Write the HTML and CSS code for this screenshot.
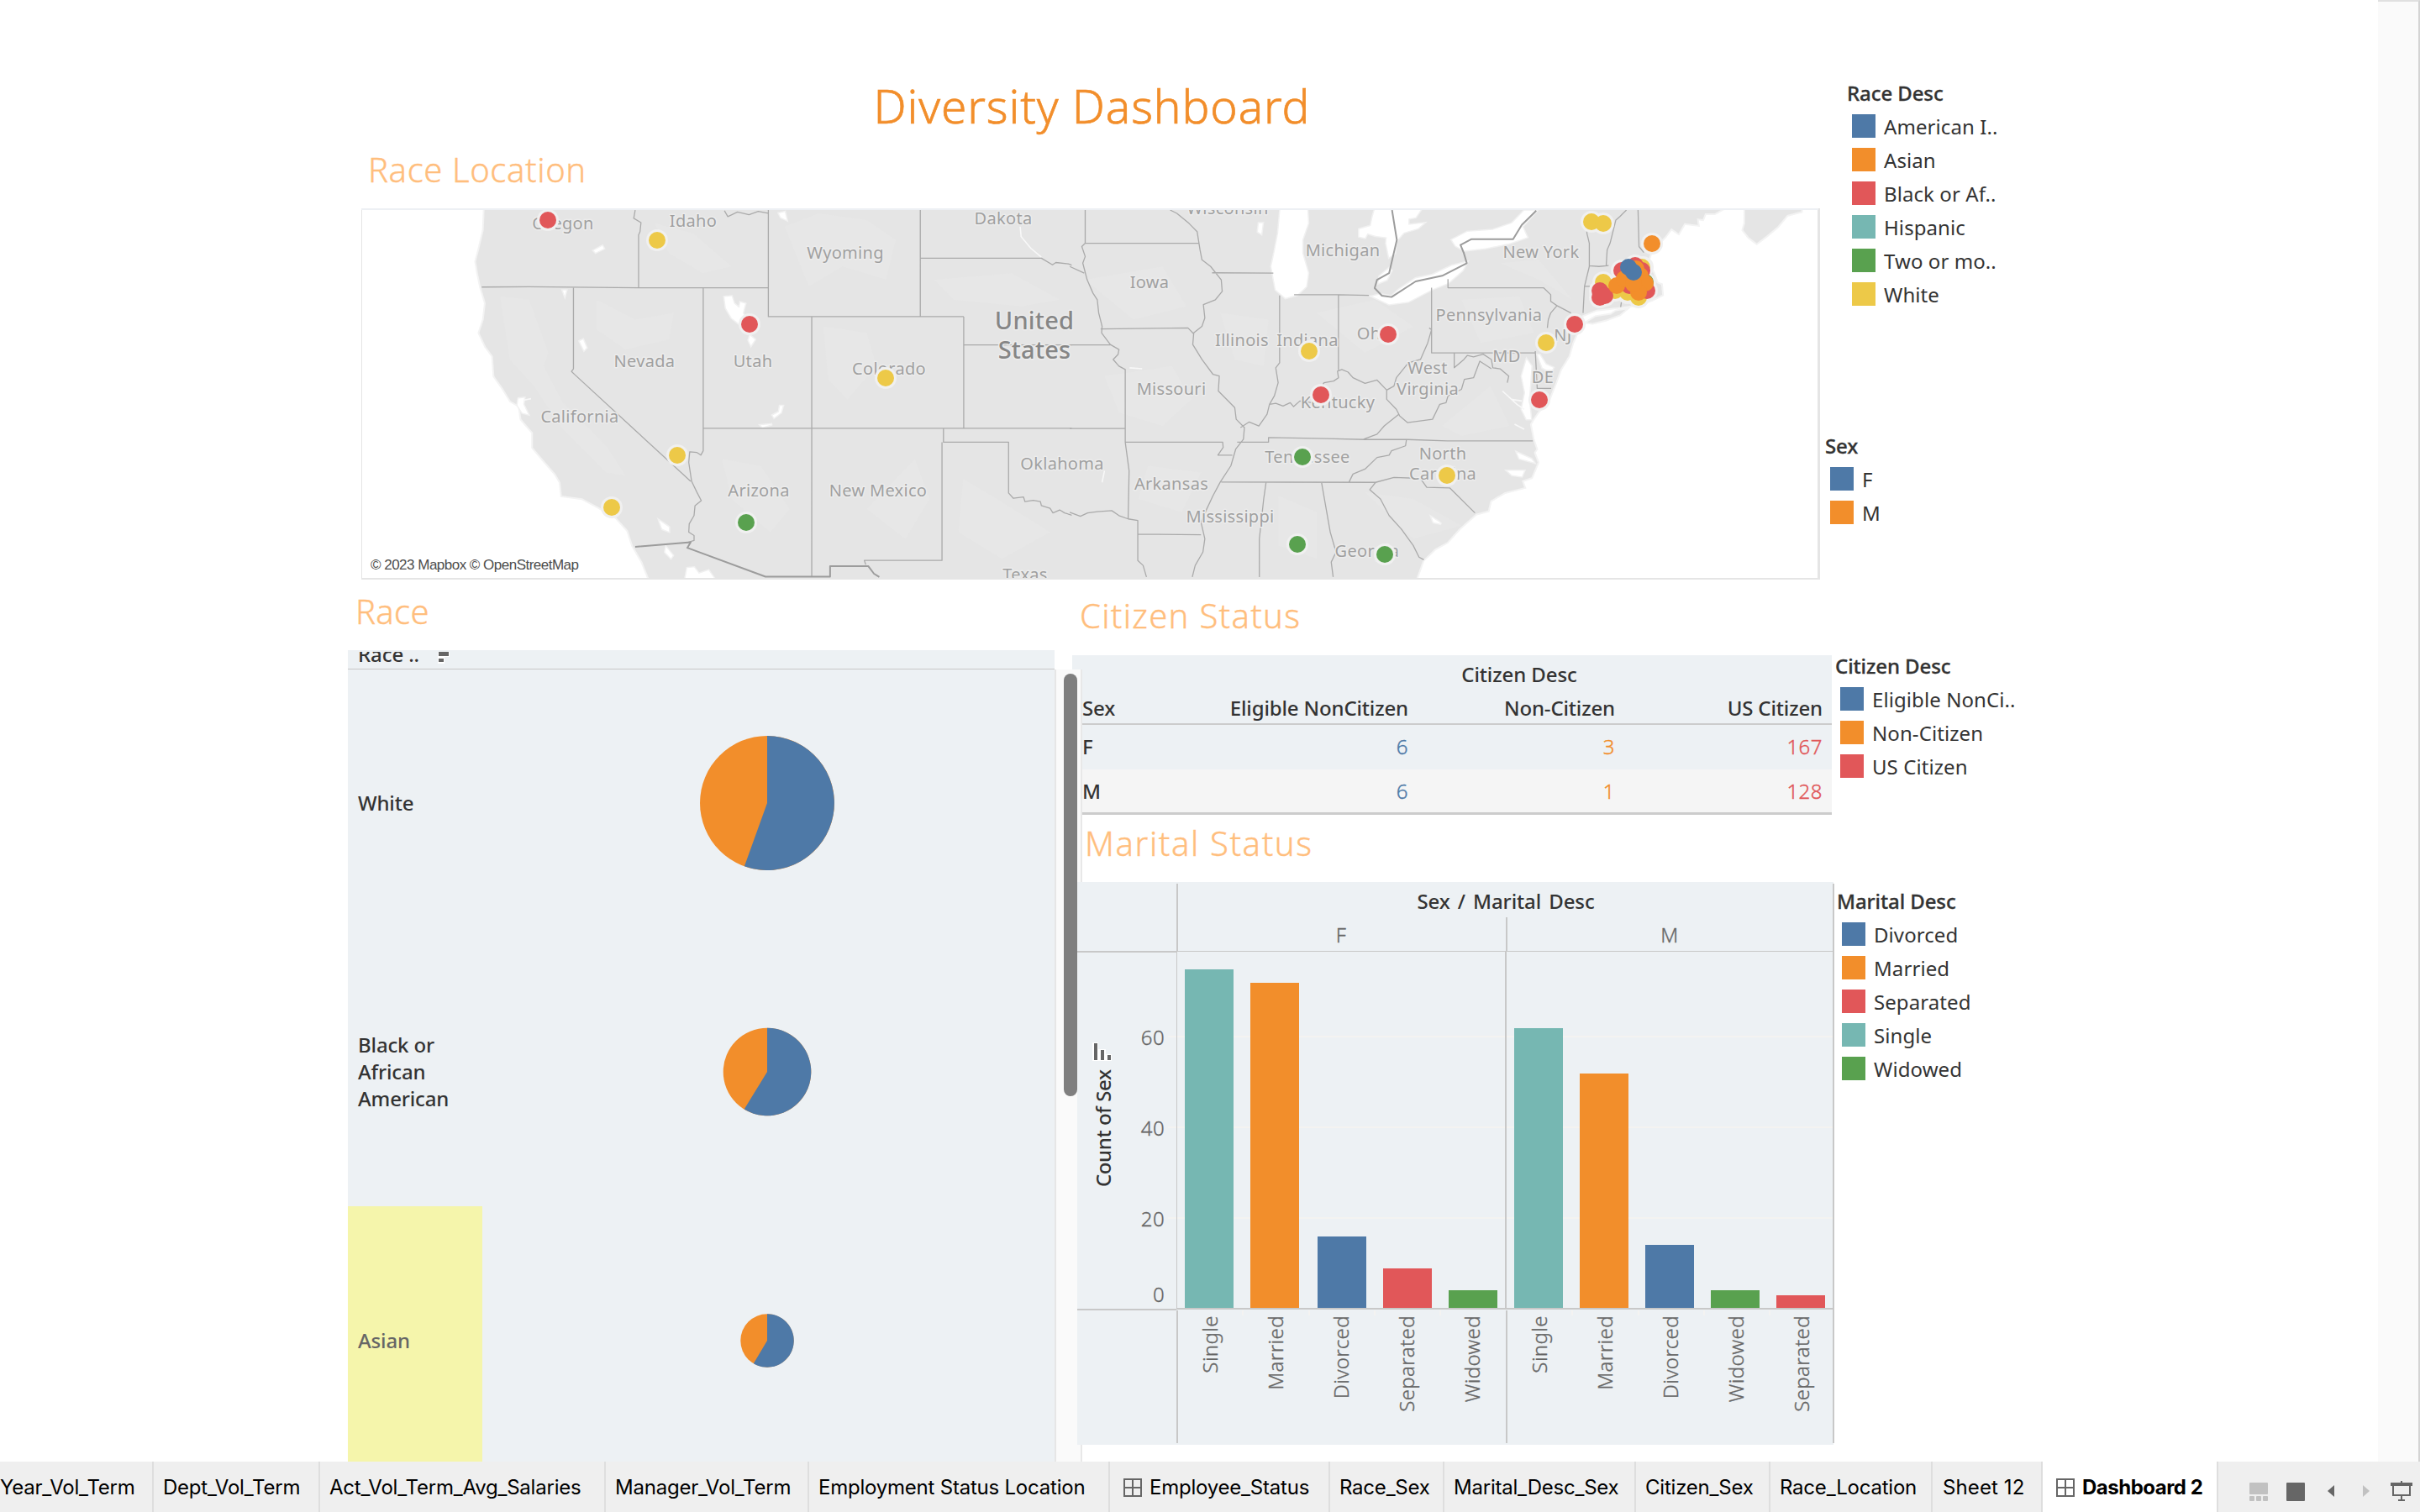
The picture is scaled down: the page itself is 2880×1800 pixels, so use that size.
FILE: index.html
```html
<!DOCTYPE html>
<html lang="en">
<head>
<meta charset="utf-8">
<title>Diversity Dashboard</title>
<link rel="stylesheet" href="styles.css">
</head>
<body>
<div class="workspace">
<main class="dashboard">
  <section class="top">
    <div class="top-main">
      <h1 class="title">Diversity Dashboard</h1>
      <h2 class="heading heading-location">Race Location</h2>
      <svg class="map" viewBox="430 248 1736 442" width="1736" height="442">
        <defs><clipPath id="mapclip"><rect x="431" y="250" width="1732" height="438"/></clipPath></defs>
        <rect x="430" y="248" width="1736" height="442" fill="#e5e5e5"/>
        <rect x="430" y="248" width="1734" height="2" fill="#edf0f4"/>
        <rect x="431" y="250" width="1732" height="438" fill="#fff"/>
        <g clip-path="url(#mapclip)">
          <!-- western half -->
          <g transform="translate(400 80) scale(.5741 .3954)">
            <path class="land" d="M308 420L306 490 298 540 290 585 294 620 300 662 310 710 306 760 297 800 310 840 325 870 328 930 345 965 362 1005 380 1020 384 1060 408 1100 408 1145 428 1180 455 1225 465 1250 468 1290 510 1298 545 1325 580 1355 605 1395 615 1440 635 1490 650 1545 1580 1545 1580 420Z"/>
            <path class="relief" d="M340 690L400 700 440 860 430 900 470 1010 560 1140 600 1230 560 1220 470 1090 410 960 360 880ZM660 470L740 500 820 600 760 620 690 560ZM930 480L1000 440 1100 460 1160 520 1140 640 1050 600 980 660ZM1010 780L1100 800 1120 900 1060 1000 1020 940ZM1240 640L1400 620 1500 700 1420 720 1280 700ZM800 1180L880 1200 940 1330 900 1400 820 1300ZM1100 1330L1200 1180 1230 1300 1180 1420ZM1300 1240L1370 1300 1480 1400 1380 1480 1290 1400ZM540 700L620 760 700 740 690 820 600 850 540 790Z"/>
            <path class="water" d="M805 692L820 690 825 712 836 725 838 708 848 712 843 740 852 768 840 778 820 755 808 725ZM858 808L868 820 860 838 855 822ZM724 1540L728 1508 742 1506 752 1525 772 1515 784 1540ZM505 825L512 820 519 845 514 852ZM534 552L552 538 555 546 538 558ZM670 1365L690 1385 690 1398 676 1390ZM684 1445L698 1470 694 1478 682 1460ZM918 440L930 436 934 460 922 452ZM378 998L390 996 388 1015 398 1045 386 1040 376 1018ZM470 672L477 672 474 688ZM920 1020L926 1020 922 1040 908 1055 905 1048 918 1038ZM880 1078L904 1075 884 1084Z"/>
            <path class="river" d="M1418 480L1420 510 1440 545 1462 572M388 1003L404 998"/>
            <path class="state" d="M620 430L617 455 632 468 630 495 627 505V664M302 662L400 661 627 664H896M896 430V751H1301M1211 430V751M1211 575H1462L1485 595 1492 588 1518 592 1540 605 1555 620 1570 680M1553 430V530M1568 530H1548L1550 575 1545 600 1555 620M492 664V908L488 916 495 926 735 1247M761 664V1155L756 1168 748 1160 733 1158 731 1190 737 1247 748 1280 757 1305 744 1320 742 1350 732 1375 731 1400 742 1410 742 1425 727 1432M986 751V1534M761 1087H1570M1301 751V1087M1301 836H1570M1259 1087V1129H1394V1282L1404 1298 1425 1294 1428 1308 1445 1304 1460 1308 1462 1320 1480 1328 1486 1342 1500 1333 1510 1342 1528 1350 1534 1338 1552 1354 1570 1345M1256 1129V1485H1095L1098 1498M805 432L812 450 832 436 856 444 875 434 896 440"/>
            <path class="border" d="M620 1444L735 1430 728 1447 890 1534H1024V1502H1103L1115 1525 1126 1535"/>
          </g>
          <!-- eastern half -->
          <g transform="translate(1280 80) scale(.5741 .3954)">
            <path class="land" d="M0 420H1350L1325 440 1305 440 1300 458 1288 455 1290 475 1262 470 1250 500 1235 485 1222 510 1205 535 1192 560 1185 590 1198 620 1205 650 1214 655 1216 685 1195 700 1165 715 1130 722 1080 730 1050 748 1045 780 1030 830 1022 870 1005 910 995 950 988 975 980 1005 960 1035 948 1060 942 1075 948 1120 955 1150 950 1160 958 1190 945 1235 925 1245 930 1265 890 1280 860 1305 855 1335 830 1345 795 1390 770 1430 745 1450 720 1485 705 1545H0Z"/>
            <rect x="-8" y="420" width="20" height="1125" fill="#e5e5e5"/>
            <path class="land" d="M1388 420L1388 470 1384 490 1396 512 1412 530 1432 508 1455 480 1475 445 1504 434 1505 420ZM1060 768L1078 752 1110 745 1120 735 1140 730 1128 745 1100 760 1072 770Z"/>
            <path class="relief" d="M60 930L200 900 240 1000 180 1080 90 1040ZM300 740L400 760 390 900 330 880ZM500 740L620 700 700 780 600 860ZM800 700L920 690 950 800 840 830ZM760 1080L860 960 900 1080 800 1110ZM600 1280L700 1300 800 1380 700 1420ZM20 640L180 600 230 720 120 760ZM150 1200L260 1220 220 1340 130 1300ZM420 1290L500 1340 500 1480 420 1440ZM880 590L960 580 1030 700 960 640Z"/>
            <path class="water" d="M425 420H480L482 470 470 520 470 560 482 620 478 660 460 685 435 695 415 670 406 600 412 560 420 500ZM622 420H720L705 452 690 456 690 475 722 470 710 485 680 498 664 525 662 560 650 572 644 530 645 512 622 508 605 500 600 514 588 510 588 488 612 478 616 450ZM650 605L655 612 645 640 628 650 630 630ZM615 690L650 714 690 706 740 668 772 650 802 612 812 586 780 598 740 625 705 636 670 670 655 690 632 684ZM780 520L812 496 865 490 905 470 930 432 956 432 926 480 936 512 900 530 850 545 806 552 788 538ZM935 880L925 930 932 980 925 1030 935 1060 944 1060 940 1000 945 900ZM958 866L968 905 986 918 990 905 975 895 962 866ZM738 1355L752 1368 758 1375 742 1370ZM380 470L388 470 385 502 378 495ZM895 1215L930 1215 925 1232 905 1228ZM915 1160L945 1180 950 1190 920 1178Z"/>
            <path class="river" d="M885 975L915 1015 930 1030M903 1000L925 1005M910 1075L930 1090M112 905L138 908M60 1215L55 1250"/>
            <path class="state" d="M20 430V530H255M20 530L13 540 20 570 15 590 24 640 36 680 45 700 48 740 55 780 54 800 72 835 90 850 88 865 78 880 90 900 103 910V1129M-12 600L18 620M196 430L210 440 235 470 252 495 258 550 262 580 280 600 302 640 304 675 290 700 265 715 268 755 262 780 245 800 243 835 262 880 285 925 298 930 296 975 330 1025 333 1060 350 1085 348 1120 332 1150 322 1200 300 1249 285 1290 272 1330 260 1370 268 1420 264 1460 248 1500 242 1535M52 788L233 785 245 803M283 619L410 620M-12 836H72M-12 1088H103M103 1129H305L306 1145 295 1168H325M103 1129L111 1215 109 1360M-12 1340L10 1352 25 1342 45 1338 75 1335 90 1350 109 1360 129 1365V1485L140 1500 147 1535M129 1406L260 1408M335 1129H400V1115L520 1118 600 1121 688 1121 770 1125H948M302 1249L622 1250 660 1235 715 1238 728 1265 776 1267 828 1342M686 1121L684 1140 655 1155 650 1168 625 1175 600 1210 575 1225 567 1249M395 1249L390 1300 381 1420V1535M510 1251L528 1400 540 1460 530 1490 534 1535M622 1250L610 1272 632 1300 650 1350 675 1390 700 1440 712 1475 722 1483M423 687V890L415 905 420 950 412 990 402 1015 397 1045 380 1080 360 1068 342 1085M402 1015L415 1012 430 1020 445 1010 452 1022 465 1005 490 1010 515 950 535 945 545 935 543 915 552 910 565 918 575 935 600 952 625 942 645 972 660 960 665 935 690 890 715 880 730 830 738 790 733 785M545 685V912M453 685H545L608 687M738 664V860H953M772 638V664H970L985 685 985 705 998 718 985 740 980 760 978 785M998 718L1027 740M785 860V905L805 880 812 868 825 872 845 864 862 880 865 905 880 908 898 930 895 950M645 972L645 1000 665 1030 672 1050 688 1070 740 1060 755 1015 768 1010 772 990 800 970 806 940 825 935 838 885 862 908M670 1045L640 1080 625 1105 597 1120M953 855L957 967H986M1052 740L1055 660 1065 600V530L1060 500V485M1065 598L1085 600 1105 597M1100 597L1102 550 1108 530 1120 460 1128 450 1142 430M1166 430L1168 540 1178 558M1055 660H1066M1132 702L1130 722"/>
            <path class="border" d="M656 430L666 520 650 620 625 640 620 665 635 688 655 692 705 645 760 628 811 590 805 560 798 535 820 518H907L925 475 955 432"/>
          </g>
          <g class="places">
            <text x="670" y="273">Oregon</text><text x="825" y="270">Idaho</text><text x="1006" y="308">Wyoming</text><text x="1194" y="267">Dakota</text><text x="767" y="437">Nevada</text><text x="896" y="437">Utah</text><text x="1058" y="446">Colorado</text><text x="690" y="503">California</text><text x="903" y="591">Arizona</text><text x="1045" y="591">New Mexico</text><text x="1264" y="559">Oklahoma</text><text x="1220" y="691">Texas</text><text x="1461" y="255">Wisconsin</text><text x="1598" y="305">Michigan</text><text x="1368" y="343">Iowa</text><text x="1834" y="307">New York</text><text x="1772" y="382">Pennsylvania</text><text x="1478" y="412">Illinois</text><text x="1556" y="412">Indiana</text><text x="1638" y="404">Ohio</text><text x="1860" y="406">NJ</text><text x="1793" y="431">MD</text><text x="1699" y="445">West</text><text x="1699" y="470">Virginia</text><text x="1836" y="456">DE</text><text x="1394" y="470">Missouri</text><text x="1592" y="486">Kentucky</text><text x="1556" y="551">Tennessee</text><text x="1717" y="547">North</text><text x="1717" y="571">Carolina</text><text x="1394" y="583">Arkansas</text><text x="1464" y="622">Mississippi</text><text x="1627" y="663">Georgia</text>
            <g class="country"><text x="1231" y="392">United</text><text x="1231" y="427">States</text></g>
          </g>
          <g class="halo">
            <circle cx="652" cy="262" r="13"/><circle cx="782" cy="286" r="13"/><circle cx="892" cy="386" r="13"/><circle cx="1054" cy="450" r="13"/><circle cx="806" cy="542" r="13"/><circle cx="728" cy="604" r="13"/><circle cx="888" cy="622" r="13"/><circle cx="1894" cy="264" r="13"/><circle cx="1908" cy="266" r="13"/><circle cx="1966" cy="290" r="13"/><circle cx="1874" cy="386" r="13"/><circle cx="1840" cy="408" r="13"/><circle cx="1832" cy="476" r="13"/><circle cx="1558" cy="418" r="13"/><circle cx="1652" cy="398" r="13"/><circle cx="1572" cy="470" r="13"/><circle cx="1550" cy="544" r="13"/><circle cx="1722" cy="566" r="13"/><circle cx="1544" cy="648" r="13"/><circle cx="1648" cy="660" r="13"/><circle cx="1908" cy="336" r="13"/><circle cx="1955" cy="318" r="13"/><circle cx="1950" cy="354" r="13"/><circle cx="1904" cy="346" r="13"/><circle cx="1904" cy="354" r="13"/><circle cx="1910" cy="352" r="13"/><circle cx="1922" cy="346" r="13"/><circle cx="1937" cy="349" r="13"/><circle cx="1930" cy="322" r="13"/><circle cx="1946" cy="316" r="13"/><circle cx="1960" cy="346" r="13"/><circle cx="1958" cy="337" r="13"/>
          </g>
          <g class="white">
            <circle cx="782" cy="286" r="10"/><circle cx="1054" cy="450" r="10"/><circle cx="806" cy="542" r="10"/><circle cx="728" cy="604" r="10"/><circle cx="1894" cy="264" r="10"/><circle cx="1908" cy="266" r="10"/><circle cx="1840" cy="408" r="10"/><circle cx="1558" cy="418" r="10"/><circle cx="1722" cy="566" r="10"/><circle cx="1908" cy="336" r="10"/><circle cx="1954" cy="318" r="10"/><circle cx="1922" cy="346" r="10"/><circle cx="1937" cy="348" r="10"/><circle cx="1950" cy="354" r="10"/>
          </g>
          <g class="multi"><circle cx="888" cy="622" r="10"/><circle cx="1550" cy="544" r="10"/><circle cx="1544" cy="648" r="10"/><circle cx="1648" cy="660" r="10"/><circle cx="1958" cy="336" r="10"/></g>
          <g class="black">
            <circle cx="652" cy="262" r="10"/><circle cx="892" cy="386" r="10"/><circle cx="1874" cy="386" r="10"/><circle cx="1832" cy="476" r="10"/><circle cx="1652" cy="398" r="10"/><circle cx="1572" cy="470" r="10"/><circle cx="1904" cy="346" r="10"/><circle cx="1904" cy="354" r="10"/><circle cx="1910" cy="352" r="10"/><circle cx="1930" cy="322" r="10"/><circle cx="1946" cy="316" r="10"/><circle cx="1954" cy="322" r="10"/><circle cx="1960" cy="346" r="10"/><circle cx="1939" cy="340" r="10"/>
          </g>
          <g class="asian"><circle cx="1966" cy="290" r="10"/><circle cx="1924" cy="340" r="10"/><circle cx="1933" cy="332" r="10"/><circle cx="1947" cy="320" r="10"/><circle cx="1952" cy="328" r="10"/><circle cx="1958" cy="337" r="10"/><circle cx="1950" cy="348" r="10"/><circle cx="1944" cy="338" r="10"/></g>
          <g class="american"><circle cx="1938" cy="318" r="10"/><circle cx="1944" cy="324" r="10"/></g>
          <rect x="436" y="660" width="260" height="24" fill="#fff" opacity=".6"/>
          <text class="credit" x="441" y="678" textLength="248">© 2023 Mapbox © OpenStreetMap</text>
        </g>
      </svg>
    </div>
    <aside class="top-legends">
      <div class="legend legend-race">
        <h3>Race Desc</h3>
        <p><i class="sw blue"></i>American I..</p>
        <p><i class="sw orange"></i>Asian</p>
        <p><i class="sw red"></i>Black or Af..</p>
        <p><i class="sw teal"></i>Hispanic</p>
        <p><i class="sw green"></i>Two or mo..</p>
        <p><i class="sw yellow"></i>White</p>
      </div>
      <div class="legend">
        <h3>Sex</h3>
        <p><i class="sw blue"></i>F</p>
        <p><i class="sw orange"></i>M</p>
      </div>
    </aside>
  </section>

  <section class="bottom">
    <div class="race">
      <h2 class="heading heading-race">Race</h2>
      <div class="race-body">
        <div class="race-panel">
          <div class="race-head"><span>Race ..</span>
            <svg width="16" height="14" viewBox="0 0 16 14"><path d="M0 0H14V6H8V14H0Z" fill="#fff"/><path d="M1 0H13V5H1ZM1 8H7V12H1Z" fill="#666"/></svg>
          </div>
          <div class="race-row"><div class="race-name">White</div>
            <svg width="160" height="160" viewBox="-80 -80 160 160"><circle r="80" fill="#f28e2b"/><path d="M0 0V-80A80 80 0 1 1 -27.1 75.3Z" fill="#4e79a7"/></svg></div>
          <div class="race-row"><div class="race-name">Black or<br>African<br>American</div>
            <svg width="106" height="106" viewBox="-53 -53 106 106"><circle r="52.3" fill="#f28e2b"/><path d="M0 0V-52.3A52.3 52.3 0 1 1 -27.3 44.6Z" fill="#4e79a7"/></svg></div>
          <div class="race-row"><div class="race-name selected">Asian</div>
            <svg width="64" height="64" viewBox="-32 -32 64 64"><circle r="31.7" fill="#f28e2b"/><path d="M0 0V-31.7A31.7 31.7 0 1 1 -16.2 27.2Z" fill="#4e79a7"/></svg></div>
        </div>
        <div class="track"><div class="thumb"></div></div>
      </div>
    </div>

    <div class="right">
      <h2 class="heading heading-citizen">Citizen Status</h2>
      <div class="citizen">
        <div class="c-title">Citizen Desc</div>
        <div class="c-row c-head"><span>Sex</span><span>Eligible NonCitizen</span><span>Non-Citizen</span><span>US Citizen</span></div>
        <div class="c-row c-f"><span>F</span><span>6</span><span>3</span><span>167</span></div>
        <div class="c-row c-m"><span>M</span><span>6</span><span>1</span><span>128</span></div>
      </div>
      <h2 class="heading heading-marital">Marital Status</h2>
      <svg class="marital" viewBox="1282 1050 902 670" width="902" height="670">
        <rect x="1282" y="1050" width="900" height="670" fill="#edf1f4"/>
        <g fill="#f4f3f1"><rect x="1390" y="1233" width="792" height="2"/><rect x="1390" y="1341" width="792" height="2"/><rect x="1390" y="1449" width="792" height="2"/><path d="M1478 1560h2v6h-2zM1557 1560h2v6h-2zM1635 1560h2v6h-2zM1713 1560h2v6h-2zM1870 1560h2v6h-2zM1949 1560h2v6h-2zM2027 1560h2v6h-2zM2105 1560h2v6h-2z"/></g>
        <g fill="#76b7b2"><rect x="1410" y="1154" width="58" height="403"/><rect x="1802" y="1224" width="58" height="333"/></g>
        <g fill="#f28e2b"><rect x="1488" y="1170" width="58" height="387"/><rect x="1880" y="1278" width="58" height="279"/></g>
        <g fill="#4e79a7"><rect x="1568" y="1472" width="58" height="85"/><rect x="1958" y="1482" width="58" height="75"/></g>
        <g fill="#e15759"><rect x="1646" y="1510" width="58" height="47"/><rect x="2114" y="1542" width="58" height="15"/></g>
        <g fill="#59a14f"><rect x="1724" y="1536" width="58" height="21"/><rect x="2036" y="1536" width="58" height="21"/></g>
        <g fill="#c8c8c8"><rect x="1400" y="1052" width="2" height="80"/><rect x="1400" y="1132" width="1" height="425"/><rect x="1400" y="1560" width="2" height="158"/><rect x="1792" y="1092" width="2" height="40"/><rect x="1791" y="1132" width="2" height="426"/><rect x="1792" y="1560" width="2" height="158"/><rect x="2181" y="1052" width="2" height="666"/><rect x="1282" y="1132" width="118" height="2"/><rect x="1400" y="1132" width="782" height="1"/><rect x="1282" y="1558" width="118" height="2"/><rect x="1400" y="1557" width="782" height="2"/></g>
        <text class="axis-title top-title" x="1792" y="1082">Sex / Marital Desc</text>
        <g class="axis mid"><text x="1596" y="1122">F</text><text x="1987" y="1122">M</text></g>
        <g class="axis end"><text x="1386" y="1244">60</text><text x="1386" y="1352">40</text><text x="1386" y="1460">20</text><text x="1386" y="1550">0</text></g>
        <g class="axis end">
          <text transform="translate(1449 1566) rotate(-90)">Single</text><text transform="translate(1527 1566) rotate(-90)">Married</text><text transform="translate(1605 1566) rotate(-90)">Divorced</text><text transform="translate(1683 1566) rotate(-90)">Separated</text><text transform="translate(1761 1566) rotate(-90)">Widowed</text>
          <text transform="translate(1841 1566) rotate(-90)">Single</text><text transform="translate(1919 1566) rotate(-90)">Married</text><text transform="translate(1997 1566) rotate(-90)">Divorced</text><text transform="translate(2075 1566) rotate(-90)">Widowed</text><text transform="translate(2153 1566) rotate(-90)">Separated</text>
        </g>
        <text class="axis-title" transform="translate(1322 1343) rotate(-90)" textLength="140">Count of Sex</text>
        <path d="M1300 1241h7v8h9v6h7v8h-23z" fill="#fff"/>
        <path d="M1302 1242h4v20h-4zM1310 1250h4v12h-4zM1318 1256h4v6h-4z" fill="#666"/>
      </svg>
    </div>

    <aside class="bottom-legends">
      <div class="legend legend-citizen">
        <h3>Citizen Desc</h3>
        <p><i class="sw blue"></i>Eligible NonCi..</p>
        <p><i class="sw orange"></i>Non-Citizen</p>
        <p><i class="sw red"></i>US Citizen</p>
      </div>
      <div class="legend legend-marital">
        <h3>Marital Desc</h3>
        <p><i class="sw blue"></i>Divorced</p>
        <p><i class="sw orange"></i>Married</p>
        <p><i class="sw red"></i>Separated</p>
        <p><i class="sw teal"></i>Single</p>
        <p><i class="sw green"></i>Widowed</p>
      </div>
    </aside>
  </section>
</main>
<div class="page-scroll"></div>
</div>

<nav class="tabs">
  <a class="tab first">Year_Vol_Term</a>
  <a class="tab">Dept_Vol_Term</a>
  <a class="tab">Act_Vol_Term_Avg_Salaries</a>
  <a class="tab">Manager_Vol_Term</a>
  <a class="tab">Employment Status Location</a>
  <a class="tab with-icon"><svg width="22" height="22" viewBox="0 0 22 22"><path d="M1 1H21V21H1ZM11 1V21M1 11H21"/></svg>Employee_Status</a>
  <a class="tab">Race_Sex</a>
  <a class="tab">Marital_Desc_Sex</a>
  <a class="tab">Citizen_Sex</a>
  <a class="tab">Race_Location</a>
  <a class="tab sheet12">Sheet 12</a>
  <a class="tab with-icon active"><svg width="22" height="22" viewBox="0 0 22 22"><path d="M1 1H21V21H1ZM11 1V21M1 11H21"/></svg>Dashboard 2</a>
  <div class="tools">
    <svg width="22" height="22" viewBox="0 0 22 22" fill="#c1c1c1"><rect width="22" height="14" rx="1"/><rect y="16" width="6" height="6" rx="1"/><rect x="8" y="16" width="6" height="6" rx="1"/><rect x="16" y="16" width="6" height="6" rx="1"/></svg>
    <svg width="22" height="22" viewBox="0 0 22 22" fill="#666"><rect width="22" height="22" rx="1"/></svg>
    <svg class="arrow" width="8" height="22" viewBox="0 0 8 22" fill="#666"><path d="M8 3V17L0 10Z"/></svg>
    <svg class="arrow next" width="8" height="22" viewBox="0 0 8 22" fill="#c1c1c1"><path d="M0 3V17L8 10Z"/></svg>
    <svg class="present" width="26" height="24" viewBox="0 0 26 24" fill="#666"><path d="M0 2H12V0H14V2H26V6H24V18H14V22H17V24H9V22H12V18H2V6H0ZM4 6V16H22V6Z" fill-rule="evenodd"/></svg>
  </div>
</nav>
</body>
</html>
```
FILE: styles.css
```css
* { box-sizing: border-box; }
body {
  margin: 0;
  width: 2880px;
  height: 1800px;
  overflow: hidden;
  display: flex;
  flex-direction: column;
  background: #fff;
  font-family: "Noto Sans", sans-serif;
  font-size: 24px;
  color: #333;
}
h1, h2, h3, p { margin: 0; }
svg { display: block; flex: none; }

.workspace { display: flex; height: 1740px; }
.dashboard { width: 2830px; height: 1740px; overflow: hidden; display: flex; flex-direction: column; }
.page-scroll { width: 50px; background: #fafafa; border-top: 2px solid #e0e0e0; border-right: 2px solid #d4d4d4; }

/* headings */
.title {
  height: 80px;
  line-height: 82px;
  padding-left: 1px;
  text-align: center;
  font-size: 55px;
  font-weight: 300;
  letter-spacing: .9px;
  color: #f28e2b;
  -webkit-text-stroke: .7px #f28e2b;
}
.heading { font-size: 40px; font-weight: 300; color: #ffbe7d; white-space: nowrap; -webkit-text-stroke: .4px #ffbe7d; }
.heading-location { height: 83px; line-height: 73px; padding-left: 8px; letter-spacing: .6px; }
.heading-race { height: 84px; line-height: 75px; padding-left: 9px; letter-spacing: .3px; }
.heading-citizen { height: 90px; line-height: 86px; padding-left: 9px; letter-spacing: 1.3px; }
.heading-marital { height: 80px; line-height: 67px; padding-left: 15px; letter-spacing: 1.6px; }

/* upper area */
.top { display: flex; height: 690px; padding-left: 430px; }
.top-main { width: 1738px; padding-top: 85px; }
.top-legends { padding: 90px 0 0 3px; display: flex; flex-direction: column; gap: 140px; }
.legend-race { margin-left: 26px; }

/* legends */
.legend { display: flex; flex-direction: column; }
.legend h3 { height: 40px; padding-left: 1px; line-height: 42px; font-size: 24px; font-weight: 500; letter-spacing: -.1px; -webkit-text-stroke: .3px #333; }
.legend p { height: 40px; padding-left: 7px; display: flex; align-items: center; gap: 10px; line-height: 43px; font-weight: 400; letter-spacing: .08px; white-space: nowrap; }
.sw { width: 28px; height: 28px; }
.blue { background: #4e79a7; }
.orange { background: #f28e2b; }
.red { background: #e15759; }
.teal { background: #76b7b2; }
.green { background: #59a14f; }
.yellow { background: #edc948; }

/* map */
.land { fill: #e5e5e5; stroke: #f3f3f3; stroke-width: 4; vector-effect: non-scaling-stroke; paint-order: stroke; }
.relief { fill: #e7e7e7; }
.water { fill: #fff; stroke: #f1f1f1; stroke-width: 3; vector-effect: non-scaling-stroke; paint-order: stroke; }
.river { fill: none; stroke: #f8f8f8; stroke-width: 1.6; vector-effect: non-scaling-stroke; }
.state { fill: none; stroke: #aaa; stroke-width: 1.3; stroke-linejoin: round; vector-effect: non-scaling-stroke; }
.border { fill: none; stroke: #9c9c9c; stroke-width: 2; stroke-linejoin: round; vector-effect: non-scaling-stroke; }
.places { font-size: 20px; fill: #a0a0a0; letter-spacing: .3px; text-anchor: middle; stroke: #ececec; stroke-width: 3px; paint-order: stroke; stroke-linejoin: round; }
.country { font-size: 29px; font-weight: 500; fill: #868686; letter-spacing: .2px; }
.halo { fill: #f0f0f0; }
.white { fill: #edc948; }
.multi { fill: #59a14f; }
.black { fill: #e15759; }
.asian { fill: #f28e2b; }
.american { fill: #4e79a7; }
.credit { font: 17px "Liberation Sans", Arial, sans-serif; fill: #4d4d4d; }

/* lower area */
.bottom { display: flex; height: 1050px; padding-left: 414px; }
.race { width: 874px; position: relative; z-index: 1; }
.race-body { display: flex; }
.race-panel { width: 841px; height: 966px; overflow: hidden; background: #edf1f4; }
.race-head {
  height: 23px;
  padding: 2px 0 0 12px;
  border-bottom: 1px solid #c8c8c8;
  display: flex;
  gap: 19px;
  font-weight: 500;
  letter-spacing: -.1px;
  white-space: nowrap;
}
.race-head span { width: 76px; height: 20px; overflow: hidden; line-height: 5px; }
.race-row { height: 320px; margin-top: -1px; margin-bottom: 1px; display: grid; grid-template-columns: 160px 678px; align-items: center; justify-items: center; }
.race-name {
  width: 160px;
  height: 320px;
  padding: 0 0 0 12px;
  display: flex;
  align-items: center;
  line-height: 32px;
  font-weight: 500;
  letter-spacing: -.15px;
}
.race-name.selected { background: #f5f5ab; color: #666; }
.track { width: 33px; height: 943px; margin-top: 23px; padding: 5px 0 0 9px; background: #fafafa; border-left: 2px solid #e6e6e6; border-right: 2px solid #e8e8e8; }
.thumb { width: 16px; height: 503px; border-radius: 8px; background: #7f7f7f; }

.right { width: 906px; margin-left: -12px; }
.citizen { width: 904px; height: 190px; padding-left: 11px; background: #edf1f4; }
.c-title { margin-left: 149px; height: 41px; line-height: 46px; text-align: center; font-weight: 500; letter-spacing: -.1px; }
.c-row { display: grid; grid-template-columns: 149px 239px 246px 247px; white-space: nowrap; padding-left: 1px; }
.c-row span { text-align: right; }
.c-row span:first-child { text-align: left; font-weight: 500; }
.c-head { height: 42px; line-height: 43px; font-weight: 500; letter-spacing: -.15px; border-bottom: 2px solid #ccc; }
.c-f { height: 53px; line-height: 51px; }
.c-m { height: 54px; line-height: 52px; background: #f5f5f5; border-bottom: 3px solid #ccc; }
.c-f span:nth-child(n+2), .c-m span:nth-child(n+2) { font-weight: 300; letter-spacing: .5px; -webkit-text-stroke: .4px currentColor; }
.c-f span:nth-child(2), .c-m span:nth-child(2) { color: #4e79a7; }
.c-f span:nth-child(3), .c-m span:nth-child(3) { color: #f28e2b; }
.c-f span:nth-child(4), .c-m span:nth-child(4) { color: #e15759; }

.marital { position: relative; z-index: 2; margin-left: 6px; }
.axis-title { font-size: 24px; font-weight: 500; fill: #333; text-anchor: middle; }
.top-title { word-spacing: 3px; letter-spacing: -.1px; }
.axis { font-size: 24px; font-weight: 300; fill: #666; stroke: #666; stroke-width: .35px; letter-spacing: .4px; }
.mid { text-anchor: middle; }
.end { text-anchor: end; }

.bottom-legends { padding-top: 82px; display: flex; flex-direction: column; gap: 120px; }
.legend-citizen { margin-left: 1px; }
.legend-marital { margin-left: 3px; }

/* sheet tabs */
.tabs {
  height: 60px;
  display: grid;
  grid-template-columns: 183px 198px 340px 242px 358px 262px 136px 228px 160px 193px 131px 209px 1fr;
  background: #efefef;
  font: 24px/61px Inter, sans-serif;
  letter-spacing: -.22px;
  color: #000;
  white-space: nowrap;
}
.tab { padding-left: 11px; border-right: 2px solid #dedede; }
.tab.first { padding-left: 0; }
.tab.sheet12 { padding-left: 12px; letter-spacing: .1px; }
.tab.with-icon { display: flex; align-items: center; gap: 9px; padding-left: 16px; }
.tab.with-icon svg { fill: none; stroke: #666; stroke-width: 2; }
.tab.active { background: #fff; font-weight: 650; letter-spacing: -.5px; }
.tools { display: flex; align-items: flex-start; padding: 25px 0 0 37px; gap: 22px; }
.arrow { margin-left: 5px; }
.arrow.next { margin-left: 12px; }
.present { margin: -2px 0 0 3px; }
```
